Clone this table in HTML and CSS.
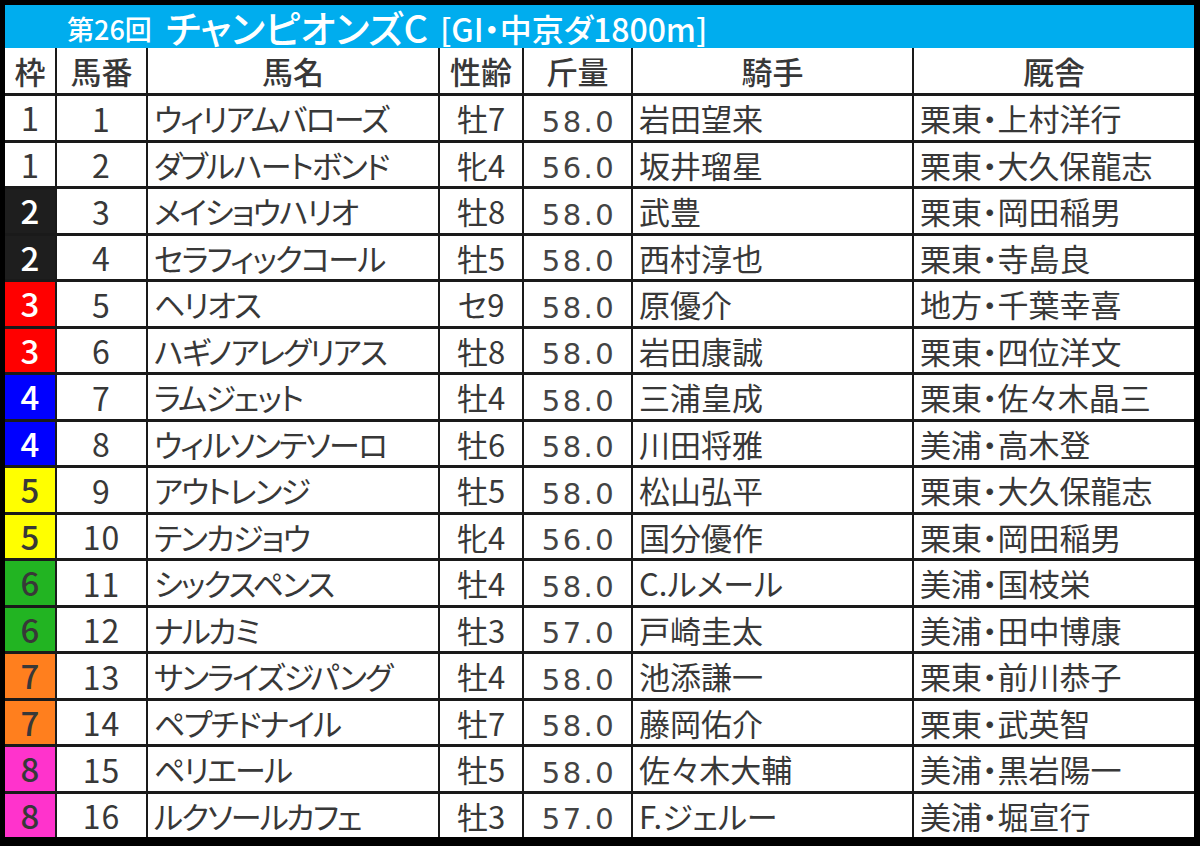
FILE: index.html
```html
<!DOCTYPE html>
<html lang="ja">
<head>
<meta charset="utf-8">
<title>チャンピオンズC 出馬表</title>
<link rel="stylesheet" href="styles.css">
</head>
<body>
<div class="board">
  <div class="title">
    <span class="t-no">第26回</span>
    <span class="t-name">チャンピオンズC</span>
    <span class="t-info">[GI・中京ダ1800m]</span>
  </div>
  <table class="entries">
    <colgroup>
      <col class="c-waku"><col class="c-ban"><col class="c-name"><col class="c-sex"><col class="c-kin"><col class="c-jockey"><col class="c-stable">
    </colgroup>
    <thead>
      <tr><th>枠</th><th>馬番</th><th>馬名</th><th>性齢</th><th>斤量</th><th>騎手</th><th>厩舎</th></tr>
    </thead>
    <tbody>
      <tr><td class="waku w1">1</td><td class="num">1</td><td class="txt name">ウィリアムバローズ</td><td class="sex">牡7</td><td class="kin">58.0</td><td class="txt">岩田望来</td><td class="txt">栗東・上村洋行</td></tr>
      <tr><td class="waku w1">1</td><td class="num">2</td><td class="txt name">ダブルハートボンド</td><td class="sex">牝4</td><td class="kin">56.0</td><td class="txt">坂井瑠星</td><td class="txt">栗東・大久保龍志</td></tr>
      <tr><td class="waku w2">2</td><td class="num">3</td><td class="txt name">メイショウハリオ</td><td class="sex">牡8</td><td class="kin">58.0</td><td class="txt">武豊</td><td class="txt">栗東・岡田稲男</td></tr>
      <tr><td class="waku w2">2</td><td class="num">4</td><td class="txt name">セラフィックコール</td><td class="sex">牡5</td><td class="kin">58.0</td><td class="txt">西村淳也</td><td class="txt">栗東・寺島良</td></tr>
      <tr><td class="waku w3">3</td><td class="num">5</td><td class="txt name">ヘリオス</td><td class="sex">セ9</td><td class="kin">58.0</td><td class="txt">原優介</td><td class="txt">地方・千葉幸喜</td></tr>
      <tr><td class="waku w3">3</td><td class="num">6</td><td class="txt name">ハギノアレグリアス</td><td class="sex">牡8</td><td class="kin">58.0</td><td class="txt">岩田康誠</td><td class="txt">栗東・四位洋文</td></tr>
      <tr><td class="waku w4">4</td><td class="num">7</td><td class="txt name">ラムジェット</td><td class="sex">牡4</td><td class="kin">58.0</td><td class="txt">三浦皇成</td><td class="txt">栗東・佐々木晶三</td></tr>
      <tr><td class="waku w4">4</td><td class="num">8</td><td class="txt name">ウィルソンテソーロ</td><td class="sex">牡6</td><td class="kin">58.0</td><td class="txt">川田将雅</td><td class="txt">美浦・高木登</td></tr>
      <tr><td class="waku w5">5</td><td class="num">9</td><td class="txt name">アウトレンジ</td><td class="sex">牡5</td><td class="kin">58.0</td><td class="txt">松山弘平</td><td class="txt">栗東・大久保龍志</td></tr>
      <tr><td class="waku w5">5</td><td class="num">10</td><td class="txt name">テンカジョウ</td><td class="sex">牝4</td><td class="kin">56.0</td><td class="txt">国分優作</td><td class="txt">栗東・岡田稲男</td></tr>
      <tr><td class="waku w6">6</td><td class="num">11</td><td class="txt name">シックスペンス</td><td class="sex">牡4</td><td class="kin">58.0</td><td class="txt">C.ルメール</td><td class="txt">美浦・国枝栄</td></tr>
      <tr><td class="waku w6">6</td><td class="num">12</td><td class="txt name">ナルカミ</td><td class="sex">牡3</td><td class="kin">57.0</td><td class="txt">戸崎圭太</td><td class="txt">美浦・田中博康</td></tr>
      <tr><td class="waku w7">7</td><td class="num">13</td><td class="txt name">サンライズジパング</td><td class="sex">牡4</td><td class="kin">58.0</td><td class="txt">池添謙一</td><td class="txt">栗東・前川恭子</td></tr>
      <tr><td class="waku w7">7</td><td class="num">14</td><td class="txt name">ペプチドナイル</td><td class="sex">牡7</td><td class="kin">58.0</td><td class="txt">藤岡佑介</td><td class="txt">栗東・武英智</td></tr>
      <tr><td class="waku w8">8</td><td class="num">15</td><td class="txt name">ペリエール</td><td class="sex">牡5</td><td class="kin">58.0</td><td class="txt">佐々木大輔</td><td class="txt">美浦・黒岩陽一</td></tr>
      <tr><td class="waku w8">8</td><td class="num">16</td><td class="txt name">ルクソールカフェ</td><td class="sex">牡3</td><td class="kin">57.0</td><td class="txt">F.ジェルー</td><td class="txt">美浦・堀宣行</td></tr>
    </tbody>
  </table>
</div>
</body>
</html>
```

FILE: styles.css
```css
html, body {
  margin: 0;
  padding: 0;
  background: #000;
}

.board {
  width: 1200px;
  height: 846px;
  box-sizing: border-box;
  padding: 5px 6px 6px 5px;
  background: #000;
  font-family: "Noto Sans CJK JP", "Noto Sans", sans-serif;
  font-feature-settings: "palt";
  color: #383838;
  display: flex;
  flex-direction: column;
}

.title {
  height: 43px;
  flex: none;
  background: #00adee;
  color: #fff;
  display: flex;
  align-items: center;
  padding-left: 62px;
  white-space: nowrap;
}

.t-no {
  font-size: 27px;
  font-weight: 500;
  line-height: 1;
  padding-top: 4px;
}

.t-name {
  font-size: 38px;
  font-weight: 500;
  margin-left: 14px;
  line-height: 1;
}

.t-info {
  font-size: 32px;
  font-weight: 500;
  margin-left: 12px;
  line-height: 1;
  padding-top: 3px;
}

.entries {
  width: 1189px;
  table-layout: fixed;
  border-collapse: collapse;
  background: #fff;
}

.c-waku { width: 51px; }
.c-ban { width: 91px; }
.c-name { width: 292px; }
.c-sex { width: 84px; }
.c-kin { width: 109px; }
.c-jockey { width: 281px; }
.c-stable { width: 281px; }

.entries th,
.entries td {
  border-style: solid;
  border-color: #1a1a1a;
  border-width: 3px 2px;
  padding: 0;
  font-size: 31px;
  font-weight: 400;
  line-height: 1;
  white-space: nowrap;
}

.entries th {
  height: 45px;
  border-top: none;
  text-align: center;
  font-weight: 500;
}

.entries td {
  height: 43.5px;
}

.entries tr > :first-child { border-left: none; }
.entries tr > :last-child { border-right: none; }
.entries tbody tr:last-child td { border-bottom: none; }

.waku {
  text-align: center;
  font-size: 33px !important;
  font-weight: 500 !important;
}

.waku.w1 {
  font-weight: 400 !important;
}

.num {
  text-align: center;
  font-size: 32px !important;
  letter-spacing: 1px;
}

.sex {
  text-align: center;
}

.entries td.kin {
  text-align: center;
  font-family: "DejaVu Sans", sans-serif;
  font-size: 29px;
  letter-spacing: 2.5px;
  text-indent: 3px;
  padding-top: 9px;
  height: 34.5px;
  color: #444;
}

.txt {
  text-align: left;
  padding-left: 6px !important;
}

.name {
  letter-spacing: -1.8px;
}

.w1 { background: #fff; color: #383838; }
.w2 { background: #1e1e1e; color: #fff; }
.w3 { background: #ff0000; color: #fff; }
.w4 { background: #0000ff; color: #fff; }
.w5 { background: #ffff00; color: #383838; }
.w6 { background: #22b422; color: #383838; }
.w7 { background: #ff7f1e; color: #383838; }
.w8 { background: #ff33cc; color: #383838; }
```
